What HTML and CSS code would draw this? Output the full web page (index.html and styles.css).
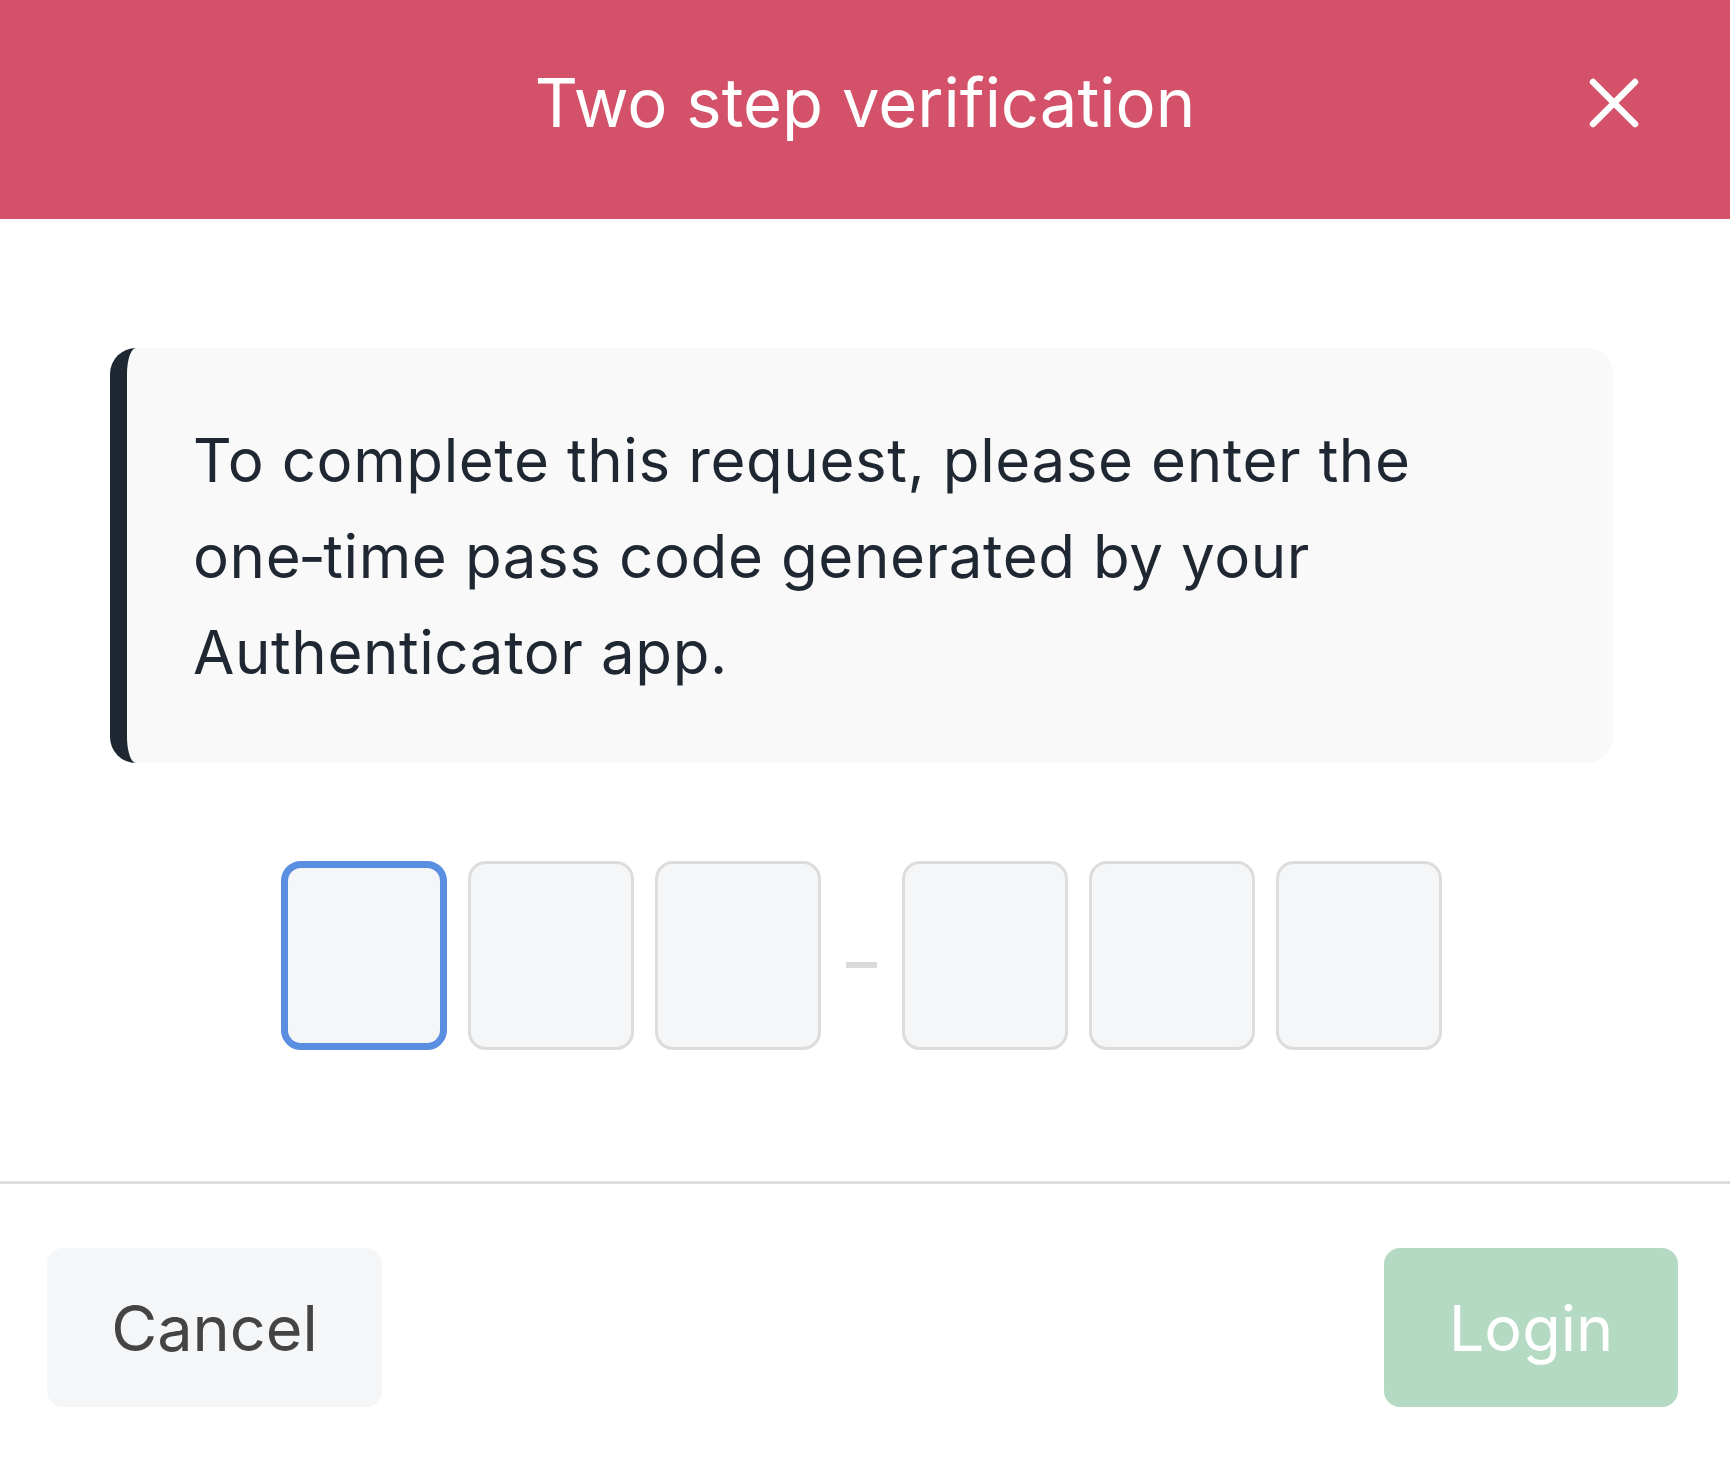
FILE: index.html
```html
<!DOCTYPE html>
<html lang="en">
<head>
    <meta charset="UTF-8">
    <meta name="viewport" content="width=device-width, initial-scale=1.0">
    <title>Two step verification</title>
    <link rel="stylesheet" href="styles.css">
</head>
<body>
    <!-- Header -->
    <div class="modal-header">
        <span></span>
        <h1>Two step verification</h1>
        <button class="close-button" aria-label="Close">
            <svg viewBox="0 0 52 52" width="52" height="52">
                <path d="M5 5 L47 47 M47 5 L5 47" stroke="#fff" stroke-width="6.5" stroke-linecap="round" fill="none"/>
            </svg>
        </button>
    </div>

    <!-- Body -->
    <div class="modal-body">
        <div class="callout">
            <p>To complete this request, please enter the one&#8209;time pass code generated by your Authenticator app.</p>
        </div>

        <div class="code-row">
            <input class="code-box focused" type="text" maxlength="1">
            <input class="code-box" type="text" maxlength="1">
            <input class="code-box" type="text" maxlength="1">
            <span class="code-dash"></span>
            <input class="code-box" type="text" maxlength="1">
            <input class="code-box" type="text" maxlength="1">
            <input class="code-box" type="text" maxlength="1">
        </div>
    </div>

    <!-- Footer -->
    <div class="modal-footer">
        <button class="btn btn-cancel">Cancel</button>
        <button class="btn btn-login" disabled>Login</button>
    </div>
</body>
</html>
```

FILE: styles.css
```css
/* General */
body {
    margin: 0;
    padding: 0;
    font-family: 'Inter', 'Noto Sans', sans-serif;
    background: #fff;
    color: #1f2732;
}

/* Header */
.modal-header {
    box-sizing: border-box;
    height: 219px;
    padding-bottom: 14px;
    background: #d45269;
    display: grid;
    grid-template-columns: 1fr auto 1fr;
    align-items: center;
}

.modal-header h1 {
    margin: 0;
    color: #fff;
    font-size: 67px;
    font-weight: 400;
    line-height: 1;
}

.close-button {
    justify-self: end;
    margin-right: 90px;
    padding: 0;
    border: none;
    background: none;
    display: flex;
    cursor: pointer;
}

/* Body */
.modal-body {
    padding: 129px 117px 131px 110px;
    border-bottom: 3px solid #dedede;
}

.callout {
    background: #f9f9f9;
    border-left: 17px solid #1f2732;
    border-radius: 26px;
    padding: 64px 60px 63px 66px;
}

.callout p {
    margin: 0;
    font-size: 60px;
    line-height: 96px;
    letter-spacing: 0.6px;
    color: #1f2732;
}

.code-row {
    margin-top: 98px;
    display: flex;
    justify-content: center;
    align-items: center;
    gap: 21px;
}

.code-box {
    box-sizing: border-box;
    width: 166px;
    height: 189px;
    margin: 0;
    padding: 0;
    background: #f5f6f8;
    border: 3px solid #dcdcdc;
    border-radius: 18px;
    outline: none;
}

.code-box.focused {
    border: 7px solid #5a8ee0;
    border-radius: 20px;
}

.code-dash {
    width: 31px;
    height: 6px;
    margin: 19px 4px 0;
    background: #dadada;
}

/* Footer */
.modal-footer {
    display: flex;
    justify-content: space-between;
    padding: 64px 52px 61px 47px;
}

.btn {
    height: 159px;
    border: none;
    border-radius: 16px;
    font-family: 'Inter', 'Noto Sans', sans-serif;
    font-size: 63px;
    font-weight: 400;
    cursor: pointer;
}

.btn-cancel {
    width: 335px;
    background: #f5f6f8;
    color: #444;
}

.btn-login {
    width: 294px;
    background: #b4dac4;
    color: #fff;
    cursor: default;
}
```
